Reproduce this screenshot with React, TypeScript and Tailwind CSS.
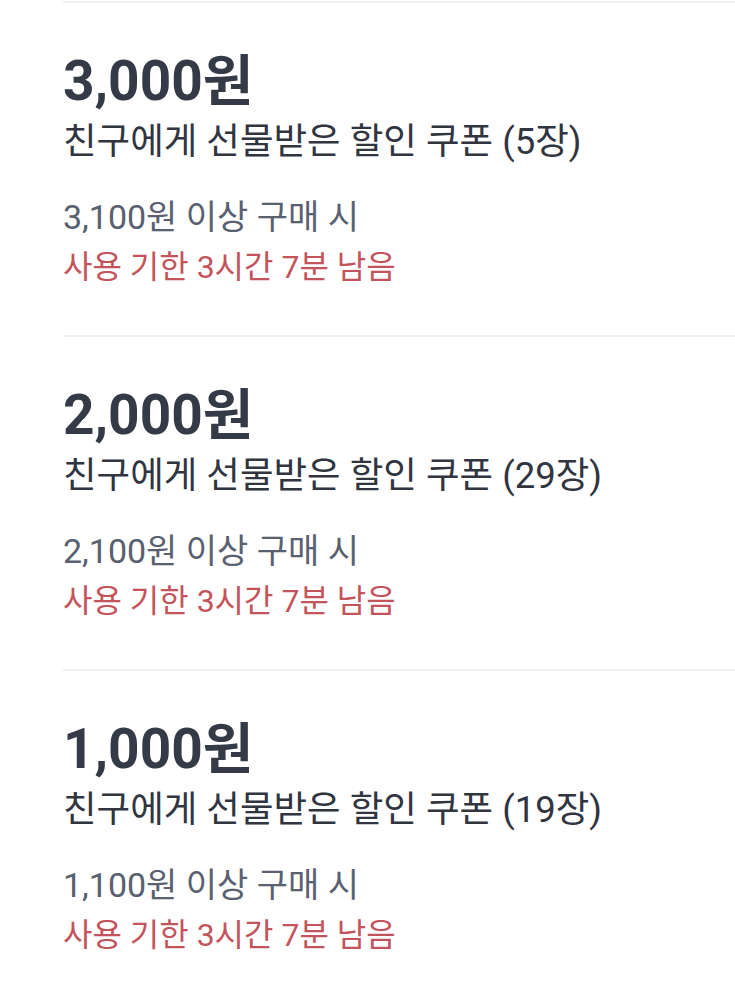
const coupons = [
  { amount: "3,000원", count: 5, min: "3,100원" },
  { amount: "2,000원", count: 29, min: "2,100원" },
  { amount: "1,000원", count: 19, min: "1,100원" },
];

const CouponItem = ({ amount, count, min }: { amount: string; count: number; min: string }) => {
  return (
    <div className="border-t-2 border-[#efefef] pt-[46px] pb-[43px]">
      <h2 className="text-[55px] leading-[64px] font-bold text-[#343a46]">{amount}</h2>
      <p className="mt-[5px] text-[36.5px] leading-[48px] text-[#30353f]">
        친구에게 선물받은 할인 쿠폰 ({count}장)
      </p>
      <p className="mt-[26px] text-[34px] leading-[50px] text-[#596070]">{min} 이상 구매 시</p>
      <p className="text-[32px] leading-[50px] text-[#c4545b]">사용 기한 3시간 7분 남음</p>
    </div>
  );
};

export default function App() {
  return (
    <div className="min-h-screen bg-white pt-[1px] pl-[63px] font-['Roboto','Noto_Sans_CJK_KR',sans-serif]">
      {coupons.map((c) => (
        <CouponItem key={c.amount} {...c} />
      ))}
    </div>
  );
}
